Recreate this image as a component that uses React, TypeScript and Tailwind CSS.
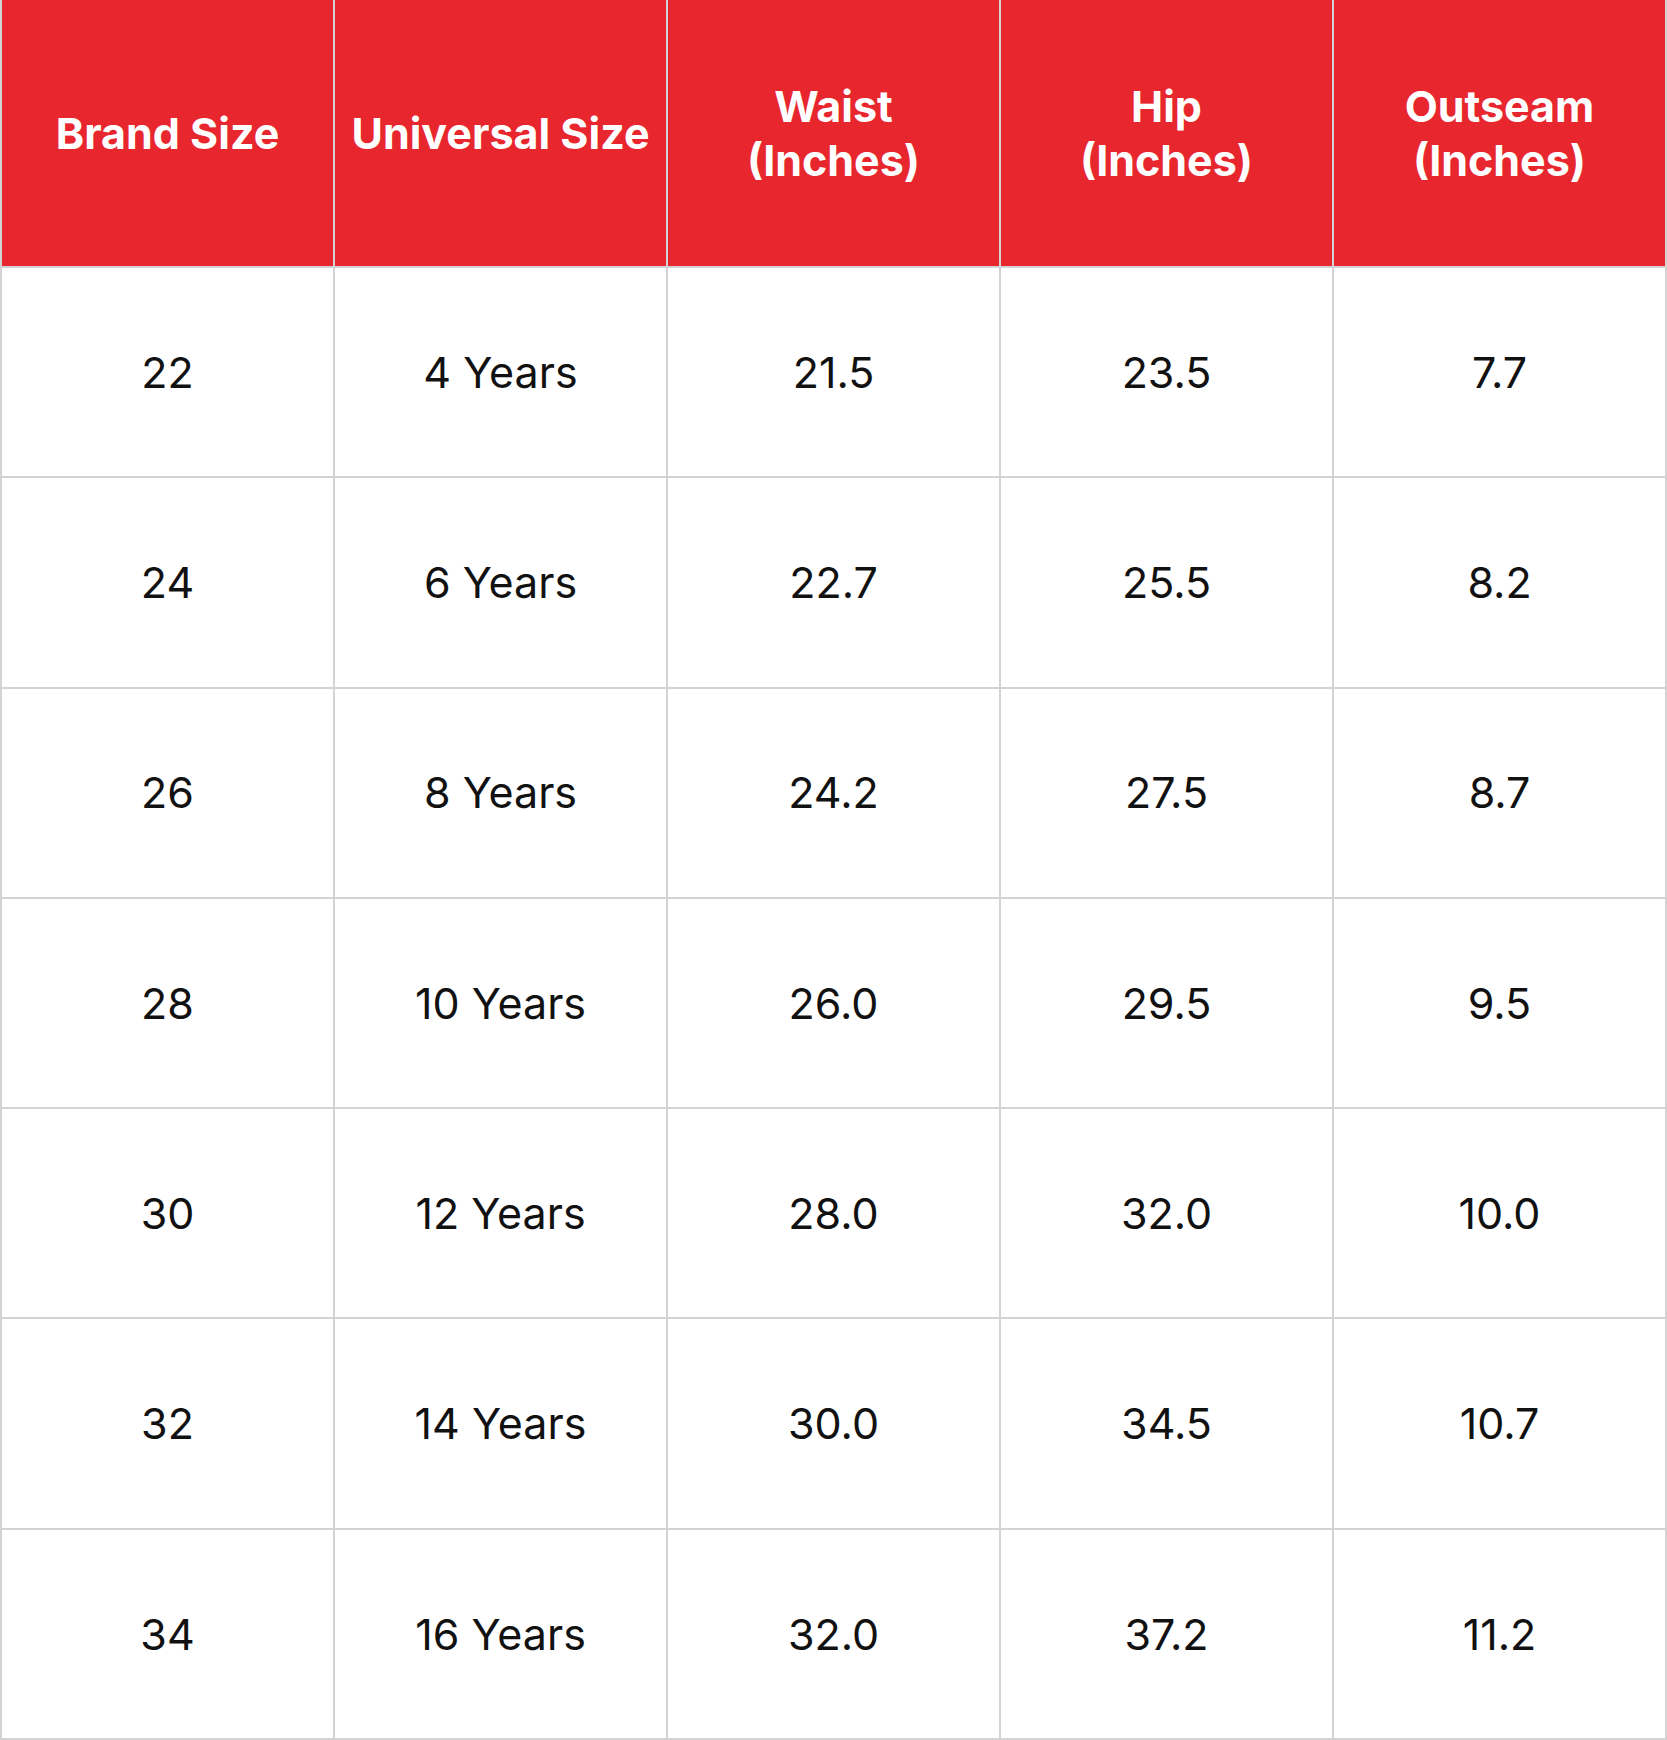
const headers = [["Brand Size"], ["Universal Size"], ["Waist", "(Inches)"], ["Hip", "(Inches)"], ["Outseam", "(Inches)"]]

const rows = [
  ["22", "4 Years", "21.5", "23.5", "7.7"],
  ["24", "6 Years", "22.7", "25.5", "8.2"],
  ["26", "8 Years", "24.2", "27.5", "8.7"],
  ["28", "10 Years", "26.0", "29.5", "9.5"],
  ["30", "12 Years", "28.0", "32.0", "10.0"],
  ["32", "14 Years", "30.0", "34.5", "10.7"],
  ["34", "16 Years", "32.0", "37.2", "11.2"],
]

export default function App() {
  return (
    <div className="h-[1740px] w-[1667px] bg-white font-['Inter',sans-serif]">
      <div className="grid h-full grid-cols-5 grid-rows-[266px_repeat(7,minmax(0,1fr))] gap-[2px] border-x-[2px] border-b-[2px] border-[#d3d3d3] bg-[#d3d3d3]">
        {headers.map((lines) => (
          <div
            key={lines[0]}
            className="flex flex-col items-center justify-center bg-[#e8262e] text-[43px] leading-[54px] font-bold text-white"
          >
            {lines.map((l) => (
              <span key={l}>{l}</span>
            ))}
          </div>
        ))}
        {rows.map((row) =>
          row.map((cell, i) => (
            <div
              key={row[0] + "-" + i}
              className="flex items-center justify-center bg-white text-[43px] font-normal text-[#111]"
            >
              {cell}
            </div>
          ))
        )}
      </div>
    </div>
  )
}
